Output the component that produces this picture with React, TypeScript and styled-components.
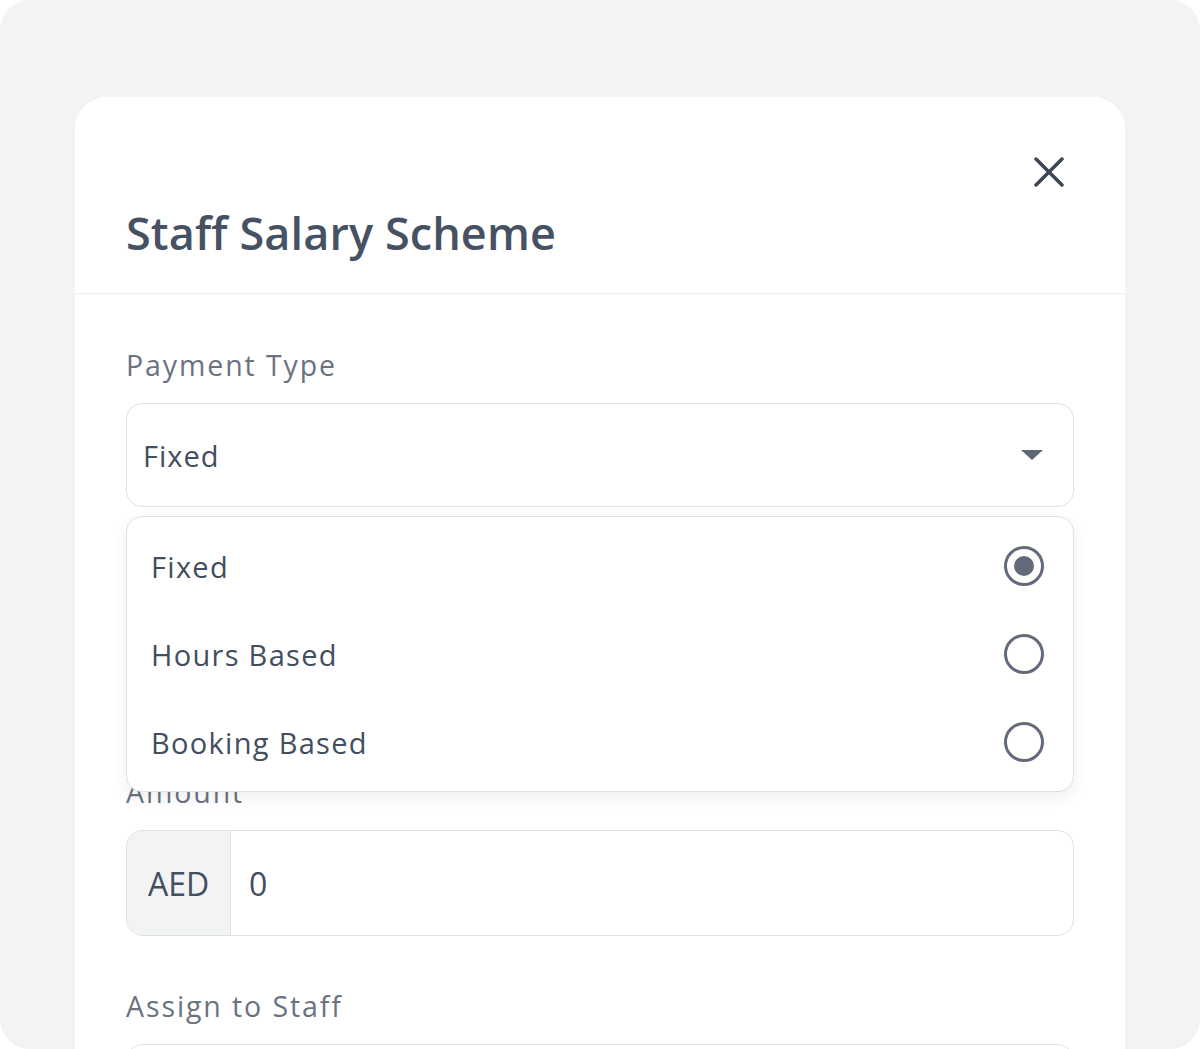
import React from 'react';
import styled, { createGlobalStyle } from 'styled-components';

const GlobalStyle = createGlobalStyle`
  html, body {
    margin: 0;
    padding: 0;
    background: #ffffff;
  }
  * {
    box-sizing: border-box;
  }
`;

const Page = styled.div`
  width: 1200px;
  height: 1049px;
  background: #f2f3f5;
  border-radius: 30px;
  overflow: hidden;
  padding: 97px 75px 0;
  font-family: "Open Sans", "Noto Sans", sans-serif;
`;

const Card = styled.div`
  background: #ffffff;
  border-radius: 32px 32px 0 0;
  min-height: 1100px;
`;

const Header = styled.div`
  display: flex;
  flex-direction: column;
  padding: 55px 51px 0 51px;
  height: 197px;
  border-bottom: 1px solid #eceef0;
`;

const CloseButton = styled.button`
  align-self: flex-end;
  width: 40px;
  height: 40px;
  margin-right: 5px;
  border: none;
  background: none;
  padding: 0;
  display: flex;
  align-items: center;
  justify-content: center;
  cursor: pointer;
`;

const Title = styled.h1`
  margin: 13px 0 0;
  font-size: 45px;
  line-height: 56px;
  font-weight: 600;
  letter-spacing: 0.1px;
  color: #465263;
`;

const Body = styled.div`
  display: flex;
  flex-direction: column;
  gap: 50px;
  padding: 51px 51px 0;
`;

const Field = styled.div`
  display: flex;
  flex-direction: column;
  gap: 18px;
`;

const Label = styled.label`
  font-size: 28.5px;
  line-height: 40px;
  letter-spacing: 1.9px;
  color: #6b7280;
`;

const SelectWrap = styled.div`
  position: relative;
`;

const SelectBox = styled.div`
  height: 104px;
  border: 1px solid #dde3e3;
  border-radius: 16px;
  display: flex;
  align-items: center;
  justify-content: space-between;
  padding: 0 30px 0 16px;
  font-size: 29px;
  letter-spacing: 1px;
  color: #434e5f;
`;

const Caret = styled.span`
  width: 0;
  height: 0;
  border-left: 11px solid transparent;
  border-right: 11px solid transparent;
  border-top: 10px solid #5f6778;
`;

const Menu = styled.div`
  position: absolute;
  top: calc(100% + 9px);
  left: 0;
  right: 0;
  height: 276px;
  background: #ffffff;
  border: 1px solid #dde3e3;
  border-radius: 16px;
  box-shadow: 0 6px 14px rgba(30, 40, 60, 0.07);
  padding: 5px 0 7px;
  z-index: 2;
  display: flex;
  flex-direction: column;
`;

const Option = styled.div`
  height: 88px;
  flex-shrink: 0;
  display: flex;
  align-items: center;
  justify-content: space-between;
  padding: 0 29px 0 24px;
  font-size: 29px;
  letter-spacing: 1.3px;
  color: #434e5f;
`;

const Radio = styled.span<{ $checked?: boolean }>`
  width: 40px;
  height: 40px;
  border-radius: 50%;
  border: 3px solid #636b7b;
  display: flex;
  align-items: center;
  justify-content: center;

  &::after {
    content: '';
    width: 20px;
    height: 20px;
    border-radius: 50%;
    background: #636b7b;
    display: ${(p) => (p.$checked ? 'block' : 'none')};
  }
`;

const UnderMenu = styled.div`
  height: 165px;
`;

const InputGroup = styled.div`
  height: 106px;
  border: 1px solid #dde3e3;
  border-radius: 16px;
  display: flex;
  overflow: hidden;
`;

const Addon = styled.span`
  width: 104px;
  background: #f2f3f5;
  border-right: 1px solid #dde3e3;
  display: flex;
  align-items: center;
  padding-left: 21px;
  font-size: 32px;
  color: #434e5f;
`;

const Input = styled.input`
  flex: 1;
  border: none;
  outline: none;
  background: transparent;
  padding: 0 18px;
  font-family: inherit;
  font-size: 32px;
  color: #434e5f;
`;

const options = ['Fixed', 'Hours Based', 'Booking Based'];

const App: React.FC = () => {
  return (
    <>
      <GlobalStyle />
      <Page>
        <Card>
          <Header>
            <CloseButton aria-label="Close">
              <svg width="30" height="30" viewBox="0 0 30 30">
                <path d="M2 2 L28 28 M28 2 L2 28" stroke="#3d4655" strokeWidth="3.5" strokeLinecap="round" />
              </svg>
            </CloseButton>
            <Title>Staff Salary Scheme</Title>
          </Header>
          <Body>
            <Field>
              <Label>Payment Type</Label>
              <SelectWrap>
                <SelectBox>
                  Fixed
                  <Caret />
                </SelectBox>
                <Menu>
                  {options.map((o) => (
                    <Option key={o}>
                      {o}
                      <Radio $checked={o === 'Fixed'} />
                    </Option>
                  ))}
                </Menu>
              </SelectWrap>
            </Field>
            <UnderMenu />
            <Field>
              <Label>Amount</Label>
              <InputGroup>
                <Addon>AED</Addon>
                <Input defaultValue="0" />
              </InputGroup>
            </Field>
            <Field>
              <Label>Assign to Staff</Label>
              <SelectBox />
            </Field>
          </Body>
        </Card>
      </Page>
    </>
  );
};

export default App;
